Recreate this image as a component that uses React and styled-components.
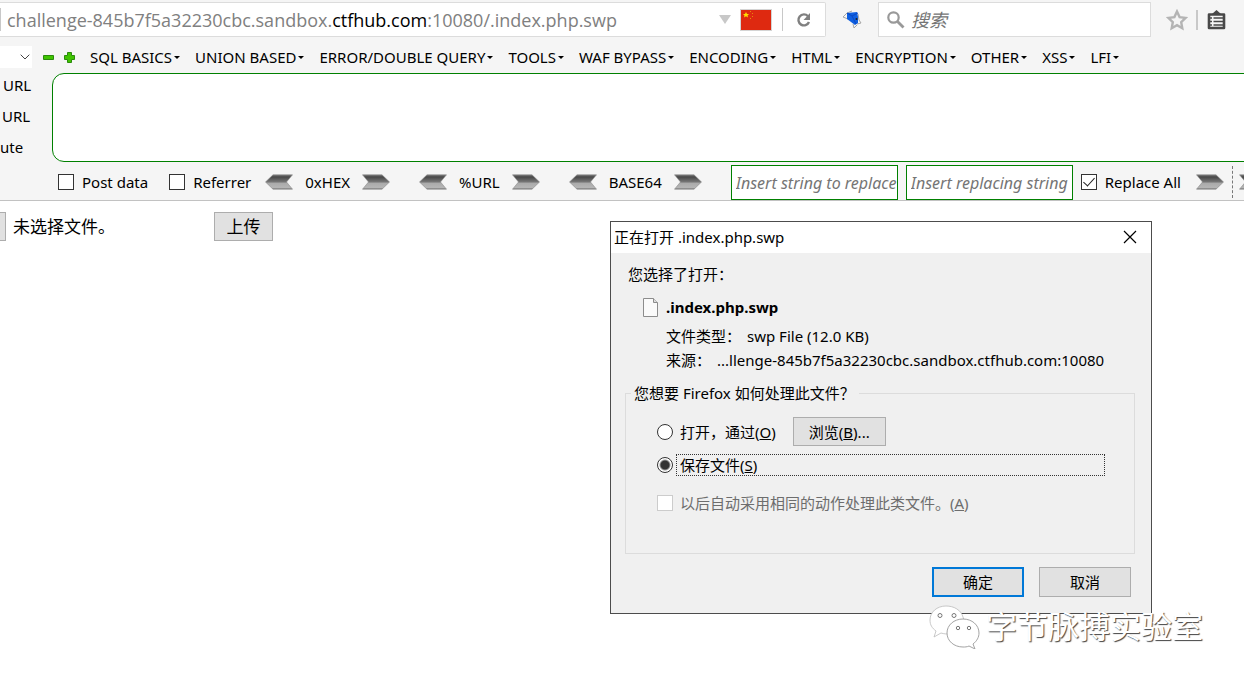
import React from 'react';
import styled, { createGlobalStyle, css } from 'styled-components';

const Global = createGlobalStyle`
  * { box-sizing: border-box; }
  body {
    margin: 0;
    background: #fff;
    color: #000;
    font: 15px/20px "Noto Sans", "Noto Sans CJK SC", sans-serif;
    overflow: hidden;
  }
  button, input, textarea, select { font: inherit; color: inherit; margin: 0; padding: 0; border-radius: 0; }
`;

const Page = styled.div`
  position: relative;
  min-height: 100vh;
  overflow: hidden;
`;

const Chrome = styled.header`
  background: #f5f5f5;
  border-bottom: 1px solid #c2c2c2;
  overflow: hidden;
`;

const NavBar = styled.div`
  display: flex;
  align-items: center;
  height: 39px;
  padding-right: 18px;
`;

const AddressBox = styled.div`
  display: flex;
  align-items: center;
  flex: 1;
  min-width: 0;
  height: 35px;
  background: #fff;
  border: 1px solid #dcdcdc;
  border-left: 0;
  border-radius: 0 2px 2px 0;
`;

const Divider = styled.span`
  width: ${p => p.$thick ? 2 : 1}px;
  height: ${p => p.$thick ? 20 : 23}px;
  background: #c8c8c8;
  flex: none;
`;

const Address = styled.div`
  flex: 1;
  padding-left: 6px;
  font-family: "Open Sans", sans-serif;
  font-size: 18px;
  line-height: 24px;
  color: #808080;
  white-space: nowrap;
  b { font-weight: 400; color: #000; }
`;

const IconButton = styled.button`
  display: flex;
  align-items: center;
  justify-content: center;
  width: ${p => p.$w}px;
  height: 30px;
  flex: none;
  border: 0;
  background: none;
`;

const Spacer = styled.span`
  width: ${p => p.$w}px;
  flex: none;
`;

const SearchBox = styled.label`
  display: flex;
  align-items: center;
  gap: 6px;
  width: 273px;
  height: 35px;
  padding: 0 8px;
  margin-right: 13px;
  background: #fff;
  border: 1px solid #dcdcdc;
`;

const SearchInput = styled.input`
  flex: 1;
  min-width: 0;
  border: 0;
  outline: 0;
  background: none;
  font-size: 18px;
  font-style: italic;
  &::placeholder { color: #757575; opacity: 1; }
`;

const MenuBar = styled.nav`
  display: flex;
  align-items: center;
  height: 34px;
  padding-top: 2px;
`;

const Preset = styled.button`
  display: flex;
  align-items: center;
  justify-content: flex-end;
  width: 32px;
  height: 22px;
  padding-right: 2px;
  margin-right: 10px;
  border: 0;
  background: #fff;
`;

const SignButton = styled.button`
  display: flex;
  width: 13px;
  height: 13px;
  margin-right: 8px;
  border: 0;
  background: none;
`;

const Menus = styled.div`
  display: flex;
  gap: 15px;
  padding-left: 6px;
`;

const MenuButton = styled.button`
  display: flex;
  align-items: center;
  gap: 2px;
  border: 0;
  background: none;
  white-space: nowrap;
  &::after {
    content: "";
    border: 3px solid transparent;
    border-top-color: #000;
    border-bottom: 0;
  }
`;

const Editor = styled.div`
  display: flex;
  height: 89px;
`;

const SideActions = styled.div`
  display: flex;
  flex-direction: column;
  align-items: flex-start;
  gap: 11px;
  width: 52px;
  padding-top: 2px;
`;

const SideButton = styled.button`
  border: 0;
  background: none;
  padding-left: ${p => p.$pad}px;
`;

const UrlArea = styled.textarea`
  flex: 1;
  height: 89px;
  margin-right: -14px;
  border: 1px solid #008000;
  border-radius: 12px;
  background: #fff;
  resize: none;
  outline: 0;
`;

const Options = styled.div`
  display: flex;
  align-items: center;
  height: 38px;
  padding: 2px 0 0 58px;
  white-space: nowrap;
  > * { flex: none; }
`;

const CheckLabel = styled.label`
  display: flex;
  align-items: center;
  gap: ${p => p.$dim ? 7 : 8}px;
  color: ${p => p.$dim ? '#6d6d6d' : '#000'};
`;

const Check = styled.input.attrs({ type: 'checkbox' })`
  appearance: none;
  position: relative;
  width: 16px;
  height: 16px;
  flex: none;
  border: 1px solid #333;
  background: #fff;
  &:disabled { border-color: #ccc; }
  &:checked::after {
    content: "";
    position: absolute;
    left: 4px;
    top: 0;
    width: 5px;
    height: 10px;
    border: solid #222;
    border-width: 0 1px 1px 0;
    transform: rotate(42deg);
  }
`;

const Codec = styled.div`
  display: flex;
  align-items: center;
  gap: 12px;
  margin-right: 29px;
`;

const ArrowButton = styled.button`
  display: flex;
  border: 0;
  background: none;
`;

const ReplaceInput = styled.input`
  width: 167px;
  height: 35px;
  margin: 1px 8px 0 0;
  padding: 0 0 0 4px;
  border: 1px solid #008000;
  background: #fff;
  outline: 0;
  font-size: 16px;
  font-style: italic;
  &::placeholder { color: #757575; opacity: 1; }
`;

const DashedEdge = styled.span`
  height: 32px;
  margin: 0 6px 0 8px;
  border-left: 1px dashed #777;
`;

const Upload = styled.form`
  display: flex;
  align-items: center;
  padding-top: 11px;
  font-size: 17px;
  line-height: 24px;
`;

const face = css`
  border: 1px solid #adadad;
  background: #e1e1e1;
`;

const UploadButton = styled.button`
  ${face}
  width: ${p => p.$w}px;
  height: 29px;
  ${p => p.$cut && 'border-left: 0;'}
`;

const FileName = styled.span`
  width: 208px;
  padding-left: 7px;
`;

const Dialog = styled.section`
  position: absolute;
  left: 610px;
  top: 221px;
  width: 542px;
  border: 1px solid #4c4c4c;
  background: #f0f0f0;
`;

const TitleBar = styled.div`
  display: flex;
  align-items: center;
  justify-content: space-between;
  height: 31px;
  padding: 0 14px 2px 3px;
  background: #fff;
`;

const Title = styled.h1`
  margin: 0;
  font-size: 15px;
  font-weight: 400;
`;

const Body = styled.div`
  padding: 11px 16px 16px 14px;
`;

const Lead = styled.p`
  margin: 0 0 12px 3px;
`;

const FileRow = styled.div`
  display: flex;
  align-items: center;
  gap: 8px;
  height: 22px;
  padding-left: 18px;
  font-weight: 700;
`;

const Details = styled.dl`
  display: flex;
  flex-direction: column;
  gap: 4px;
  margin: 8px 0 0 41px;
  div { display: flex; gap: 6px; white-space: nowrap; }
  dd { margin: 0; }
`;

const Choices = styled.fieldset`
  height: 171px;
  min-width: 0;
  margin: 13px 0;
  padding: 14px 29px 0 31px;
  border: 1px solid #dcdcdc;
  legend { margin-left: -26px; padding: 0 4px 0 3px; }
`;

const ChoiceRow = styled.div`
  display: flex;
  align-items: center;
  gap: 13px;
  height: 29px;
  margin-bottom: ${p => p.$gap}px;
`;

const RadioLabel = styled.label`
  display: flex;
  align-items: center;
  gap: 3px;
  flex: ${p => p.$wide ? 1 : 'none'};
`;

const RadioText = styled.span`
  flex: ${p => p.$focus ? 1 : 'none'};
  padding: 0 3px;
  border: 1px dotted ${p => p.$focus ? '#333' : 'transparent'};
`;

const Radio = styled.input.attrs({ type: 'radio' })`
  appearance: none;
  width: 16px;
  height: 16px;
  flex: none;
  border: 1px solid #333;
  border-radius: 50%;
  background: #fff;
  &:checked { background: radial-gradient(circle, #333 4px, #fff 6px); }
`;

const DialogButton = styled.button`
  ${face}
  width: ${p => p.$tall ? 92 : 93}px;
  height: ${p => p.$tall ? 30 : 29}px;
  ${p => p.$primary && 'border: 2px solid #0078d7;'}
`;

const Actions = styled.div`
  display: flex;
  justify-content: flex-end;
  gap: 15px;
  padding-right: 4px;
`;

const Watermark = styled.div`
  position: absolute;
  left: 928px;
  top: 603px;
  display: flex;
  align-items: center;
  gap: 6px;
  color: #fff;
  font-size: 31px;
  line-height: 46px;
  text-shadow: 1px 1px 1px #444;
  white-space: nowrap;
`;

const Arrow = ({ back }) => (
  <svg width="28" height="16" viewBox="0 0 28 16">
    <defs>
      <linearGradient id="metal" x1="0" y1="0" x2="0" y2="1">
        <stop offset="0" stopColor="#777" />
        <stop offset=".15" stopColor="#484848" />
        <stop offset=".5" stopColor="#777" />
        <stop offset=".58" stopColor="#aaa" />
        <stop offset=".88" stopColor="#b5b5b5" />
        <stop offset="1" stopColor="#777" />
      </linearGradient>
    </defs>
    <path transform={back ? undefined : 'matrix(-1 0 0 1 28 0)'} d="M.5 8 8 .8h19.5L21.5 8l6 7.200H8z" fill="url(#metal)" stroke="#888" strokeWidth=".6" />
  </svg>
);

const Sign = ({ plus }) => (
  <svg width="13" height="13" viewBox="0 0 13 13">
    <path d={plus ? 'M4.500 1.500h4v3h3v4h-3v3h-4v-3h-3v-4h3z' : 'M1.500 4.500h10v4h-10z'} fill="#3fc400" stroke="#2b8a0c" strokeLinejoin="round" />
  </svg>
);

const Flag = () => (
  <svg width="32" height="22" viewBox="0 0 32 22">
    <path d="M0 0h32v22H0z" fill="#d4d4d4" />
    <path d="M1 1h30v20H1z" fill="#de2910" />
    <path d="m6 3 1 2h2L7.500 6.500 8 8.500 6 7.300 4 8.500l.5-2L3 5h2z" fill="#ffde00" />
    <path d="M10 2h1v1h-1zM12 4h1v1h-1zM12 7h1v1h-1zM10 9h1v1h-1z" fill="#e88a0c" />
  </svg>
);

const menus = ['SQL BASICS', 'UNION BASED', 'ERROR/DOUBLE QUERY', 'TOOLS', 'WAF BYPASS', 'ENCODING', 'HTML', 'ENCRYPTION', 'OTHER', 'XSS', 'LFI'];
const codecs = ['0xHEX', '%URL', 'BASE64'];

export default function App() {
  return (
    <Page>
      <Global />
      <Chrome>
        <NavBar>
          <AddressBox>
            <Divider />
            <Address>challenge-845b7f5a32230cbc.sandbox.<b>ctfhub.com</b>:10080/.index.php.swp</Address>
            <IconButton $w={30} aria-label="History">
              <svg width="12" height="9" viewBox="0 0 12 9"><path d="M0 0h12L6 9z" fill="#c8c8c8" /></svg>
            </IconButton>
            <Flag />
            <Spacer $w={10} />
            <Divider />
            <IconButton $w={42} aria-label="Reload">
              <svg width="16" height="16" viewBox="0 0 16 16"><path d="M12 4.200A5.500 5.500 0 1 0 13 10" fill="none" stroke="#808080" strokeWidth="2.400" /><path d="M14 1v7H7.500z" fill="#808080" /></svg>
            </IconButton>
          </AddressBox>
          <IconButton $w={52} aria-label="Proxy">
            <svg width="20" height="20" viewBox="0 0 20 20">
              <path d="M1 7 5 3l5-2M1 7l5 2M16 4l1 6 2 3-4 1M11 14l1 4 3-3" fill="none" stroke="#a5a5a5" />
              <path d="m5 3 10-1 1 5v6l-3 2-4-3-4-3z" fill="#0f5fe0" />
              <path d="m5 3 5 3 6-3M10 6l4 8" fill="none" stroke="#0a48c4" />
              <circle cx="14.500" cy="9" r="1" fill="#222" />
            </svg>
          </IconButton>
          <SearchBox>
            <svg width="18" height="18" viewBox="0 0 18 18"><circle cx="6.500" cy="6.500" r="5.200" fill="none" stroke="#999" strokeWidth="2.200" /><path d="m10.500 10.500 6 6" stroke="#999" strokeWidth="2.800" /></svg>
            <SearchInput placeholder="搜索" aria-label="搜索" />
          </SearchBox>
          <IconButton $w={26} aria-label="Bookmark">
            <svg width="22" height="22" viewBox="0 0 22 22"><path d="m11 2.500 2.600 5.600 6 .8-4.400 4.200 1.100 6.100-5.300-3-5.300 3 1.100-6.100L2.400 8.900l6-.8z" fill="none" stroke="#b4b4b4" strokeWidth="2.400" /></svg>
          </IconButton>
          <Spacer $w={6} />
          <Divider $thick />
          <Spacer $w={9} />
          <IconButton $w={19} aria-label="Bookmarks list">
            <svg width="19" height="20" viewBox="0 0 19 20"><path d="M2 4.500h15V18H2z" fill="#f5f5f5" stroke="#484848" strokeWidth="2.600" strokeLinejoin="round" /><path d="M5 4 9.500 0 14 4z" fill="#484848" /><path d="M3 8h2m1.500 0H16M3 11.500h2m1.500 0H16M3 15h2m1.500 0H16" stroke="#484848" strokeWidth="1.500" /></svg>
          </IconButton>
        </NavBar>
        <MenuBar>
          <Preset aria-label="Preset">
            <svg width="10" height="6" viewBox="0 0 10 6"><path d="m.7.7 4.300 4.300L9.300.7" fill="none" stroke="#444" /></svg>
          </Preset>
          <SignButton aria-label="Remove"><Sign /></SignButton>
          <SignButton aria-label="Add"><Sign plus /></SignButton>
          <Menus>{menus.map(m => <MenuButton key={m}>{m}</MenuButton>)}</Menus>
        </MenuBar>
        <Editor>
          <SideActions>
            <SideButton $pad={3}>URL</SideButton>
            <SideButton $pad={2}>URL</SideButton>
            <SideButton $pad={0}>ute</SideButton>
          </SideActions>
          <UrlArea aria-label="URL" />
        </Editor>
        <Options>
          <CheckLabel><Check />Post data</CheckLabel>
          <Spacer $w={21} />
          <CheckLabel><Check />Referrer</CheckLabel>
          <Spacer $w={14} />
          {codecs.map(c => (
            <Codec key={c}>
              <ArrowButton aria-label={`Decode ${c}`}><Arrow back /></ArrowButton>
              {c}
              <ArrowButton aria-label={`Encode ${c}`}><Arrow /></ArrowButton>
            </Codec>
          ))}
          <ReplaceInput placeholder="Insert string to replace" aria-label="Insert string to replace" />
          <ReplaceInput placeholder="Insert replacing string" aria-label="Insert replacing string" />
          <CheckLabel><Check defaultChecked />Replace All</CheckLabel>
          <Spacer $w={15} />
          <ArrowButton aria-label="Replace"><Arrow /></ArrowButton>
          <DashedEdge />
          <ArrowButton aria-label="Next"><Arrow /></ArrowButton>
        </Options>
      </Chrome>

      <Upload onSubmit={e => e.preventDefault()}>
        <UploadButton type="button" $w={6} $cut aria-label="选择文件" />
        <FileName>未选择文件。</FileName>
        <UploadButton $w={59}>上传</UploadButton>
      </Upload>

      <Dialog role="dialog" aria-labelledby="title">
        <TitleBar>
          <Title id="title">正在打开 .index.php.swp</Title>
          <IconButton $w={14} aria-label="Close">
            <svg width="14" height="14" viewBox="0 0 14 14"><path d="m1 1 12 12M13 1 1 13" stroke="#000" strokeWidth="1.200" /></svg>
          </IconButton>
        </TitleBar>
        <Body>
          <Lead>您选择了打开：</Lead>
          <FileRow>
            <svg width="15" height="19" viewBox="0 0 15 19"><path d="M.5.500h10l4 4v14H.5z" fill="#fafafa" stroke="#8c8c8c" /><path d="M10.500.500v4h4" fill="#ddd" stroke="#8c8c8c" /></svg>
            .index.php.swp
          </FileRow>
          <Details>
            <div><dt>文件类型：</dt><dd>swp File (12.0 KB)</dd></div>
            <div><dt>来源：</dt><dd>...llenge-845b7f5a32230cbc.sandbox.ctfhub.com:10080</dd></div>
          </Details>
          <Choices>
            <legend>您想要 Firefox 如何处理此文件？</legend>
            <ChoiceRow $gap={4}>
              <RadioLabel><Radio name="action" /><RadioText>打开，通过(<u>O</u>)</RadioText></RadioLabel>
              <DialogButton>浏览(<u>B</u>)...</DialogButton>
            </ChoiceRow>
            <ChoiceRow $gap={9}>
              <RadioLabel $wide><Radio name="action" defaultChecked /><RadioText $focus>保存文件(<u>S</u>)</RadioText></RadioLabel>
            </ChoiceRow>
            <ChoiceRow $gap={0}>
              <CheckLabel $dim><Check disabled /><span>以后自动采用相同的动作处理此类文件。(<u>A</u>)</span></CheckLabel>
            </ChoiceRow>
          </Choices>
          <Actions>
            <DialogButton $tall $primary>确定</DialogButton>
            <DialogButton $tall>取消</DialogButton>
          </Actions>
        </Body>
      </Dialog>

      <Watermark>
        <svg width="52" height="46" viewBox="0 0 52 46">
          <path d="M18 3C9 3 2 9 2 17c0 5 2 8 6 11l-2 6 7-4c3 1 6 1 9 1h6c9-3 9-12 7-17C33 7 26 3 18 3z" fill="#fff" stroke="#bbb" strokeWidth=".8" />
          <path d="M35 16c-9 0-16 6-16 14s7 14 16 14c2 0 4 0 6-1l6 3-2-5c4-3 6-7 6-11 0-8-7-14-16-14z" fill="#fff" stroke="#999" strokeWidth=".9" />
          <g fill="#fff" stroke="#777"><circle cx="12" cy="12.500" r="2" /><circle cx="26" cy="12.500" r="2" /><circle cx="30" cy="25" r="1.700" /><circle cx="41" cy="25" r="1.700" /></g>
        </svg>
        <span>字节脉搏实验室</span>
      </Watermark>
    </Page>
  );
}
